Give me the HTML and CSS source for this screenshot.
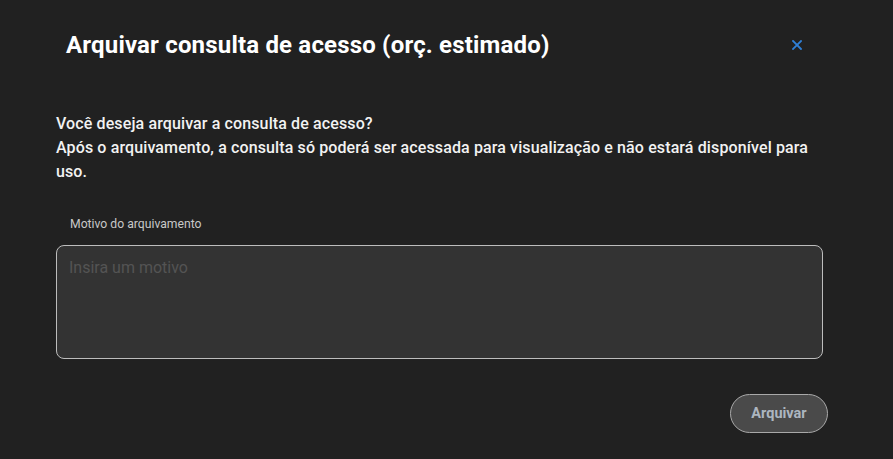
FILE: index.html
```html
<!DOCTYPE html>
<html lang="pt">
<head>
<meta charset="utf-8">
<link rel="stylesheet" href="styles.css">
</head>
<body>
<div class="dialog">
  <div class="header">
    <h1 class="title">Arquivar consulta de acesso (orç. estimado)</h1>
    <button class="close" aria-label="Fechar">
      <svg width="10" height="10" viewBox="0 0 10 10"><path d="M1 1L9 9M9 1L1 9" stroke="#2f7fd6" stroke-width="1.8" stroke-linecap="square"/></svg>
    </button>
  </div>
  <div class="content">
    <p class="message">Você deseja arquivar a consulta de acesso?<br>Após o arquivamento, a consulta só poderá ser acessada para visualização e não estará disponível para uso.</p>
    <label class="label" for="motivo">Motivo do arquivamento</label>
    <textarea id="motivo" class="field" placeholder="Insira um motivo"></textarea>
  </div>
  <div class="actions">
    <button class="btn">Arquivar</button>
  </div>
</div>
</body>
</html>
```
FILE: styles.css
```css
html, body {
  margin: 0;
  padding: 0;
  background: #212121;
  font-family: Roboto, "Liberation Sans", sans-serif;
}
.dialog {
  width: 893px;
  height: 459px;
  box-sizing: border-box;
  padding: 0 70px 0 56px;
  display: flex;
  flex-direction: column;
}
.header {
  display: flex;
  align-items: center;
  justify-content: space-between;
  height: 90px;
  padding: 0 21px 0 10px;
}
.title {
  margin: 0;
  font-size: 24px;
  font-weight: 700;
  color: #ffffff;
  line-height: 30px;
  letter-spacing: 0.18px;
}
.close {
  background: none;
  border: 0;
  padding: 0;
  width: 10px;
  height: 10px;
  display: flex;
  cursor: pointer;
}
.content {
  padding-top: 22px;
  display: flex;
  flex-direction: column;
}
.message {
  margin: 0;
  font-size: 16px;
  font-weight: 500;
  line-height: 24px;
  color: #f2f2f2;
  letter-spacing: 0.12px;
}
.label {
  margin: 32px 0 0 14px;
  font-size: 12.2px;
  line-height: 16px;
  color: #c8c8c8;
}
.field {
  margin-top: 13px;
  height: 114px;
  box-sizing: border-box;
  resize: none;
  background: #333333;
  border: 1px solid #bdbdbd;
  border-radius: 8px;
  padding: 12px 12px;
  font-family: Roboto, "Liberation Sans", sans-serif;
  font-size: 16px;
  color: #eee;
  outline: none;
}
.field::placeholder {
  color: #545454;
}
.actions {
  display: flex;
  justify-content: flex-end;
  margin-top: 35px;
  margin-right: -5px;
}
.btn {
  width: 98px;
  height: 39px;
  border-radius: 20px;
  background: #4a4a4a;
  border: 1px solid #a9a9a9;
  color: #adb6c0;
  font-family: Roboto, "Liberation Sans", sans-serif;
  font-size: 14.5px;
  font-weight: 700;
  cursor: pointer;
}
```
